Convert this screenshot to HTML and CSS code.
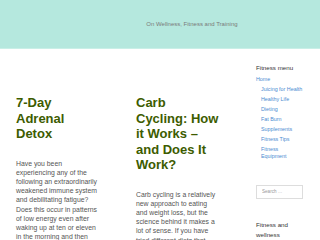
FILE: index.html
```html
<!DOCTYPE html>
<html lang="en">
<head>
  <meta charset="UTF-8">
  <link rel="stylesheet" href="styles.css">
</head>
<body>

  <div class="site-header">
    <div class="tagline">On Wellness, Fitness and Training</div>
  </div>

  <div class="main-container">
    <div class="post">
      <h2 class="post-title">7-Day Adrenal Detox</h2>
      <p class="post-excerpt">Have you been experiencing any of the following an extraordinarily weakened immune system and debilitating fatigue? Does this occur in patterns of low energy even after waking up at ten or eleven in the morning and then feeling tired again?</p>
    </div>

    <div class="post">
      <h2 class="post-title">Carb Cycling: How it Works – and Does It Work?</h2>
      <p class="post-excerpt">Carb cycling is a relatively new approach to eating and weight loss, but the science behind it makes a lot of sense. If you have tried different diets that never worked for you, read on.</p>
    </div>

    <div class="sidebar">
      <div class="widget">
        <div class="widget-title">Fitness menu</div>
        <ul class="menu">
          <li><a href="#">Home</a>
            <ul class="sub-menu">
              <li><a href="#">Juicing for Health</a></li>
              <li><a href="#">Healthy Life</a></li>
              <li><a href="#">Dieting</a></li>
              <li><a href="#">Fat Burn</a></li>
              <li><a href="#">Supplements</a></li>
              <li><a href="#">Fitness Tips</a></li>
              <li><a href="#">Fitness Equipment</a></li>
            </ul>
          </li>
        </ul>
      </div>

      <div class="widget">
        <input class="search-field" type="search" placeholder="Search …">
      </div>

      <div class="widget">
        <div class="widget-title">Fitness and wellness</div>
      </div>
    </div>
  </div>

</body>
</html>
```

FILE: styles.css
```css
html {
overflow: hidden;
}

body {
margin: 0;
font-family: "Liberation Sans", Arial, sans-serif;
background-color: #fff;
}

.site-header {
background-color: #b5e8de;
height: 48px;
border-bottom: 1px solid #c9efe7;
display: flex;
align-items: center;
justify-content: center;
padding-left: 64px;
}

.tagline {
font-size: 6px;
color: #7a7a7a;
}

.main-container {
display: grid;
grid-template-columns: 83px 83px 48px;
column-gap: 37px;
padding: 0 16px;
align-items: start;
}

.post {
padding-top: 46px;
}

.post-title {
margin: 0 0 17px;
font-size: 13px;
line-height: 15.5px;
font-weight: bold;
color: #3d5c00;
}

.post-excerpt {
margin: 0;
font-size: 6.85px;
line-height: 9.2px;
color: #555;
}

.sidebar {
padding-top: 13.6px;
}

.widget {
margin-bottom: 21.5px;
}

.widget-title {
font-size: 6.2px;
line-height: 9.5px;
color: #333;
margin-bottom: 4.4px;
}

.menu,
.sub-menu {
list-style: none;
margin: 0;
padding: 0;
}

.sub-menu {
padding-left: 5px;
}

.menu li {
font-size: 5.35px;
line-height: 7px;
}

.menu a {
display: block;
padding-bottom: 3px;
color: #4b8bd1;
text-decoration: none;
}

.search-field {
display: block;
box-sizing: border-box;
width: 47px;
height: 14px;
margin: 0;
padding: 0 0 0 5px;
border: 1px solid #ddd;
font-family: "Liberation Sans", Arial, sans-serif;
font-size: 4.6px;
color: #555;
background-color: #fff;
-webkit-appearance: none;
appearance: none;
outline: none;
}

.search-field::placeholder {
color: #999;
}
```
